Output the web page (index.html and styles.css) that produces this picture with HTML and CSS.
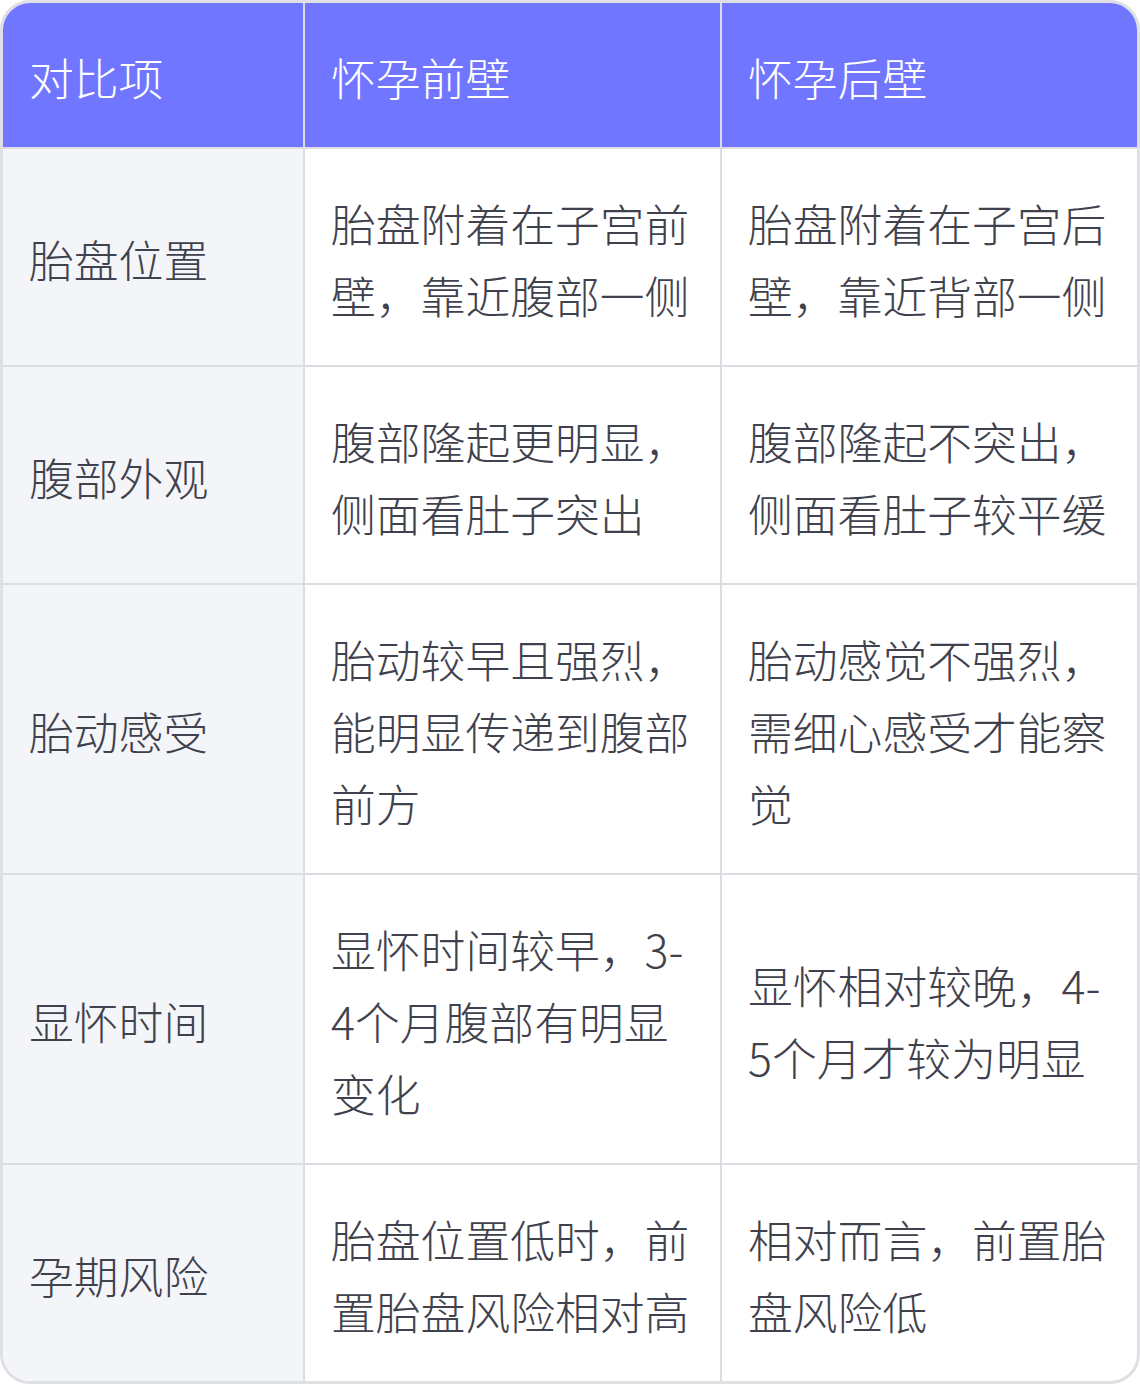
FILE: index.html
```html
<!DOCTYPE html>
<html lang="zh-CN">
<head>
<meta charset="utf-8">
<link rel="stylesheet" href="styles.css">
</head>
<body>
<table class="cmp">
  <thead>
    <tr>
      <th class="c1">对比项</th>
      <th class="c2">怀孕前壁</th>
      <th class="c3">怀孕后壁</th>
    </tr>
  </thead>
  <tbody>
    <tr>
      <td class="c1">胎盘位置</td>
      <td class="c2">胎盘附着在子宫前壁，靠近腹部一侧</td>
      <td class="c3">胎盘附着在子宫后壁，靠近背部一侧</td>
    </tr>
    <tr>
      <td class="c1">腹部外观</td>
      <td class="c2">腹部隆起更明显，侧面看肚子突出</td>
      <td class="c3">腹部隆起不突出，侧面看肚子较平缓</td>
    </tr>
    <tr>
      <td class="c1">胎动感受</td>
      <td class="c2">胎动较早且强烈，能明显传递到腹部前方</td>
      <td class="c3">胎动感觉不强烈，需细心感受才能察觉</td>
    </tr>
    <tr>
      <td class="c1">显怀时间</td>
      <td class="c2">显怀时间较早，3-4个月腹部有明显变化</td>
      <td class="c3">显怀相对较晚，4-5个月才较为明显</td>
    </tr>
    <tr>
      <td class="c1">孕期风险</td>
      <td class="c2">胎盘位置低时，前置胎盘风险相对高</td>
      <td class="c3">相对而言，前置胎盘风险低</td>
    </tr>
  </tbody>
</table>
</body>
</html>
```
FILE: styles.css
```css
html, body {
  margin: 0;
  padding: 0;
  background: #ffffff;
}
.cmp {
  width: 1140px;
  border-collapse: separate;
  border-spacing: 0;
  border: 3px solid #dfe0e4;
  border-radius: 30px;
  overflow: hidden;
  table-layout: fixed;
  font-family: "Noto Sans CJK SC", "Noto Sans", sans-serif;
  font-size: 44.8px;
  line-height: 72px;
  font-weight: 300;
  color: #3f424d;
}
.cmp th, .cmp td {
  padding: 38px 30px 34px 26px;
  text-align: left;
  vertical-align: middle;
  border-right: 2px solid #dcdde3;
  border-bottom: 2px solid #dcdde3;
  word-break: break-all;
}
.cmp th {
  background: #7076ff;
  color: #ffffff;
  font-weight: 300;
}
.cmp tr > :last-child {
  border-right: none;
}
.cmp tbody tr:last-child td {
  border-bottom: none;
}
.cmp .c1 {
  width: 244px;
}
.cmp .c2, .cmp .c3 {
  width: 359px;
}
.cmp td.c1 {
  background: #f4f5f9;
}
```
